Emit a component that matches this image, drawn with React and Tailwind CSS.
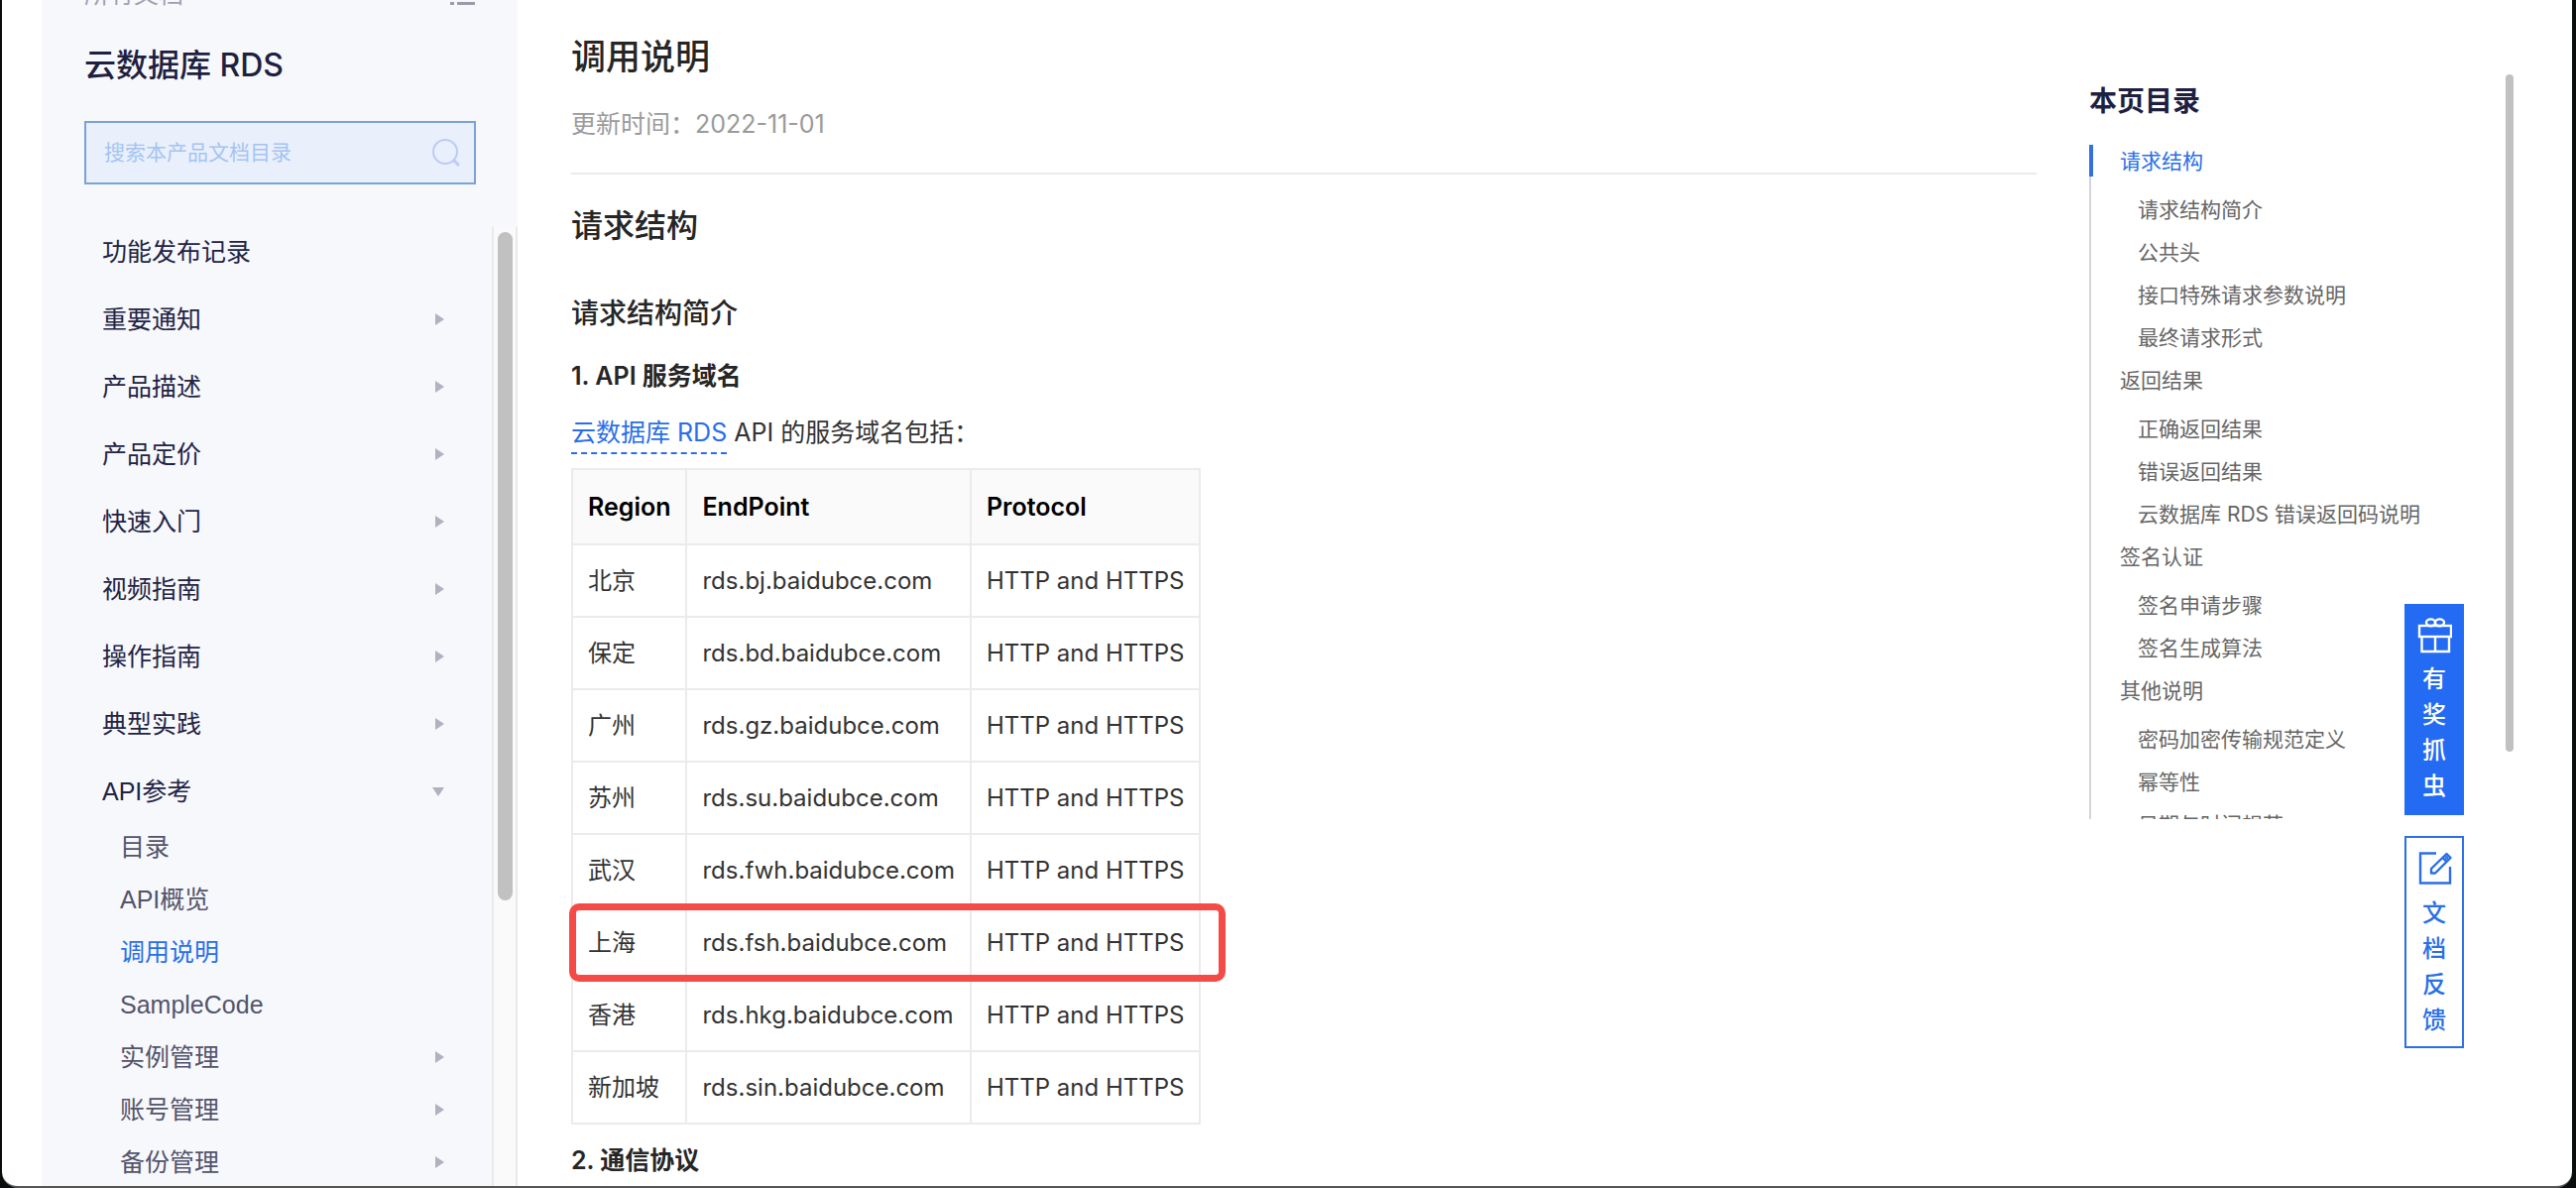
import React from "react";

const navItems = [
  { label: "功能发布记录" },
  { label: "重要通知", arrow: true },
  { label: "产品描述", arrow: true },
  { label: "产品定价", arrow: true },
  { label: "快速入门", arrow: true },
  { label: "视频指南", arrow: true },
  { label: "操作指南", arrow: true },
  { label: "典型实践", arrow: true },
];

const apiItems = [
  { label: "目录" },
  { label: "API概览" },
  { label: "调用说明", active: true },
  { label: "SampleCode" },
  { label: "实例管理", arrow: true },
  { label: "账号管理", arrow: true },
  { label: "备份管理", arrow: true },
];

const endpoints = [
  ["北京", "rds.bj.baidubce.com"],
  ["保定", "rds.bd.baidubce.com"],
  ["广州", "rds.gz.baidubce.com"],
  ["苏州", "rds.su.baidubce.com"],
  ["武汉", "rds.fwh.baidubce.com"],
  ["上海", "rds.fsh.baidubce.com"],
  ["香港", "rds.hkg.baidubce.com"],
  ["新加坡", "rds.sin.baidubce.com"],
];

const toc = [
  {
    label: "请求结构",
    active: true,
    children: ["请求结构简介", "公共头", "接口特殊请求参数说明", "最终请求形式"],
  },
  {
    label: "返回结果",
    children: ["正确返回结果", "错误返回结果", "云数据库 RDS 错误返回码说明"],
  },
  { label: "签名认证", children: ["签名申请步骤", "签名生成算法"] },
  {
    label: "其他说明",
    children: ["密码加密传输规范定义", "幂等性", "日期与时间规范"],
  },
];

function ArrowRight() {
  return (
    <svg className="h-3 w-[9px]" viewBox="0 0 9 12" aria-hidden="true">
      <path d="M0 0L9 6L0 12Z" fill="#b1b1c0" />
    </svg>
  );
}

function ArrowDown() {
  return (
    <svg className="h-[9px] w-3" viewBox="0 0 12 9" aria-hidden="true">
      <path d="M0 0H12L6 9Z" fill="#b1b1c0" />
    </svg>
  );
}

function Sidebar() {
  return (
    <aside className="ml-10 flex h-full w-[480px] shrink-0 flex-col bg-[#f7f8fc] font-['Liberation_Sans','Noto_Sans_CJK_SC',sans-serif]">
      <div className="-mt-[22px] flex items-center justify-between px-[43px]">
        <a href="#all" className="text-[25px] leading-8 text-[#a0a0b2]">
          所有文档
        </a>
        <button type="button" aria-label="目录列表">
          <svg className="h-6 w-[26px]" viewBox="0 0 26 24" fill="#9b9bae" aria-hidden="true">
            <path d="M1 4h4v3H1zM8 4h18v3H8zM1 12h4v3H1zM8 12h18v3H8zM1 20h4v3H1zM8 20h18v3H8z" />
          </svg>
        </button>
      </div>
      <h2 className="mt-8 px-[43px] font-[Inter,'Noto_Sans_CJK_SC',sans-serif] text-[32px] leading-[48px] font-medium text-[#1f1f3f]">
        云数据库 RDS
      </h2>
      <div className="mr-[42px] ml-[43px] mt-8 flex h-16 items-center border-2 border-[#7ba1d6] bg-[#e9f0fb] pr-3.5 pl-[18px]">
        <input
          type="text"
          aria-label="搜索本产品文档目录"
          placeholder="搜索本产品文档目录"
          className="min-w-0 flex-1 bg-transparent text-[21px] leading-8 text-[#1f1f3f] outline-none placeholder:text-[#a5c4f3]"
        />
        <button type="button" aria-label="搜索">
          <svg className="size-7" viewBox="0 0 28 28" fill="none" stroke="#bccbf6" strokeWidth="2" strokeLinecap="round" aria-hidden="true">
            <circle cx="13" cy="13" r="12" />
            <path d="M22 22L26 26" strokeWidth="3" />
          </svg>
        </button>
      </div>
      <nav className="mt-[43px] flex min-h-0 flex-1 overflow-hidden">
        <ul className="flex flex-1 flex-col gap-8 pt-[7px] pr-[48px] pl-[61px] text-[25px] leading-9 text-[#222344]">
          {navItems.map((item) => (
            <li key={item.label}>
              <a href="#nav" className="flex items-center justify-between">
                {item.label}
                {item.arrow && <ArrowRight />}
              </a>
            </li>
          ))}
          <li>
            <a href="#api" className="flex items-center justify-between">
              API参考
              <ArrowDown />
            </a>
            <ul className="mt-5 flex flex-col gap-[17px] pl-[18px]">
              {apiItems.map((item) => (
                <li key={item.label}>
                  <a
                    href="#api-item"
                    className={
                      item.active
                        ? "flex items-center justify-between text-[#2a6fe8]"
                        : "flex items-center justify-between text-[#53546b]"
                    }
                  >
                    {item.label}
                    {item.arrow && <ArrowRight />}
                  </a>
                </li>
              ))}
            </ul>
          </li>
        </ul>
        <div className="flex w-[26px] justify-center border-x-2 border-[#e9e9e9] bg-[#fafafa] pt-[5px]">
          <div className="h-[674px] w-[15px] rounded-full bg-[#c1c1c1]" />
        </div>
      </nav>
    </aside>
  );
}

function EndpointTable() {
  return (
    <table className="mt-3.5 border-collapse text-left">
      <thead>
        <tr className="h-[76px] bg-[#fafafa] text-black">
          {["Region", "EndPoint", "Protocol"].map((h) => (
            <th key={h} scope="col" className="border-2 border-[#ebebeb] px-[15px] font-semibold">
              {h}
            </th>
          ))}
        </tr>
      </thead>
      <tbody className="text-2xl">
        {endpoints.map(([region, host]) => (
          <tr key={host} className="relative h-[73px]">
            <td className="border-2 border-[#ebebeb] px-[15px]">
              {region}
              {region === "上海" && (
                <span className="absolute -inset-y-[3px] -right-[26px] -left-[3px] rounded-[10px] border-7 border-[#f54b47]" />
              )}
            </td>
            <td className="border-2 border-[#ebebeb] px-[15px]">{host}</td>
            <td className="border-2 border-[#ebebeb] px-[15px]">HTTP and HTTPS</td>
          </tr>
        ))}
      </tbody>
    </table>
  );
}

function Article() {
  return (
    <main className="min-w-0 flex-1 pt-[33px] pl-[54px] text-[25px] leading-10 text-[#333333]">
      <h1 className="text-[35px] leading-[48px] font-medium text-[#262626]">调用说明</h1>
      <p className="mt-6 border-b-2 border-[#ebebeb] pb-[29px] text-[#9b9b9b]">
        更新时间：2022-11-01
      </p>
      <h2 className="mt-7 text-[32px] leading-[48px] font-medium text-[#262626]">请求结构</h2>
      <h3 className="mt-11 text-[28px] leading-10 font-medium text-[#262626]">请求结构简介</h3>
      <h4 className="mt-[25px] leading-9 font-semibold text-[#262626]">1. API 服务域名</h4>
      <p className="mt-[19px]">
        <a href="#rds" className="inline-block border-b-2 border-dashed border-[#2a6fe8] text-[#2a6fe8]">
          云数据库 RDS
        </a>{" "}
        API 的服务域名包括：
      </p>
      <EndpointTable />
      <h4 className="mt-[18px] leading-9 font-semibold text-[#262626]">2. 通信协议</h4>
    </main>
  );
}

function PageToc() {
  return (
    <aside className="ml-[53px] w-[487px] shrink-0 pt-[82px]">
      <h2 className="text-[28px] leading-10 font-semibold text-[#1f1f3f]">本页目录</h2>
      <nav className="mt-6 max-h-[680px] overflow-hidden border-l-2 border-[#d4d5dc] text-[21px] leading-[43px] text-[#666666]">
        <ul className="-mt-[5px]">
          {toc.map((group) => (
            <li key={group.label}>
              <a
                href="#section"
                className={group.active ? "block pl-[29px] text-[#2a6fe8]" : "block pl-[29px]"}
              >
                {group.label}
              </a>
              <ul className="mt-1.5 pl-[47px]">
                {group.children.map((c) => (
                  <li key={c}>
                    <a href="#section">{c}</a>
                  </li>
                ))}
              </ul>
            </li>
          ))}
        </ul>
      </nav>
    </aside>
  );
}

function GiftIcon() {
  return (
    <svg className="size-9" viewBox="0 0 36 36" fill="none" stroke="currentColor" strokeWidth="2.4" aria-hidden="true">
      <rect x="3" y="8" width="32" height="11" />
      <path d="M5.500 19V34H33V19M19 19V34" />
      <ellipse cx="14.500" cy="4.800" rx="4.500" ry="3.400" />
      <ellipse cx="23.500" cy="4.800" rx="4.500" ry="3.400" />
    </svg>
  );
}

function EditIcon() {
  return (
    <svg className="size-9" viewBox="0 0 36 36" fill="none" stroke="currentColor" strokeWidth="2.4" aria-hidden="true">
      <path d="M20 3.500H4V33.500H34V17" />
      <path d="M15 23.500V19L30.500 4L34.500 8L19 23.500Z" strokeLinejoin="round" />
      <path d="M26.500 8L30.500 12" />
      <circle cx="30.500" cy="8" r="0.800" />
    </svg>
  );
}

function FloatingButtons() {
  return (
    <div className="absolute top-[609px] right-[109px] flex w-[60px] flex-col gap-[21px] text-2xl leading-9 font-medium">
      <button type="button" className="flex h-[213px] flex-col items-center bg-[#246bf3] pt-3.5 text-white">
        <GiftIcon />
        <span className="mt-2 w-6">有奖抓虫</span>
      </button>
      <button
        type="button"
        className="flex h-[214px] flex-col items-center border-2 border-[#2a6fe8] bg-white pt-3 text-[#2a6fe8]"
      >
        <EditIcon />
        <span className="mt-2.5 w-6">文档反馈</span>
      </button>
    </div>
  );
}

export default function App() {
  return (
    <div className="h-screen bg-[#0a0d0d] pr-1 pl-0.5 font-[Inter,'Noto_Sans_CJK_SC',sans-serif]">
      <div className="relative flex h-full overflow-hidden rounded-b-2xl border-b-2 border-[#555555] bg-white">
        <Sidebar />
        <Article />
        <PageToc />
        <span className="absolute top-[146px] right-[483px] h-8 w-1 bg-[#3470e4]" />
        <FloatingButtons />
        <div className="absolute top-[75px] right-[59px] h-[683px] w-2 rounded-full bg-[#c1c1c1]" />
      </div>
    </div>
  );
}
